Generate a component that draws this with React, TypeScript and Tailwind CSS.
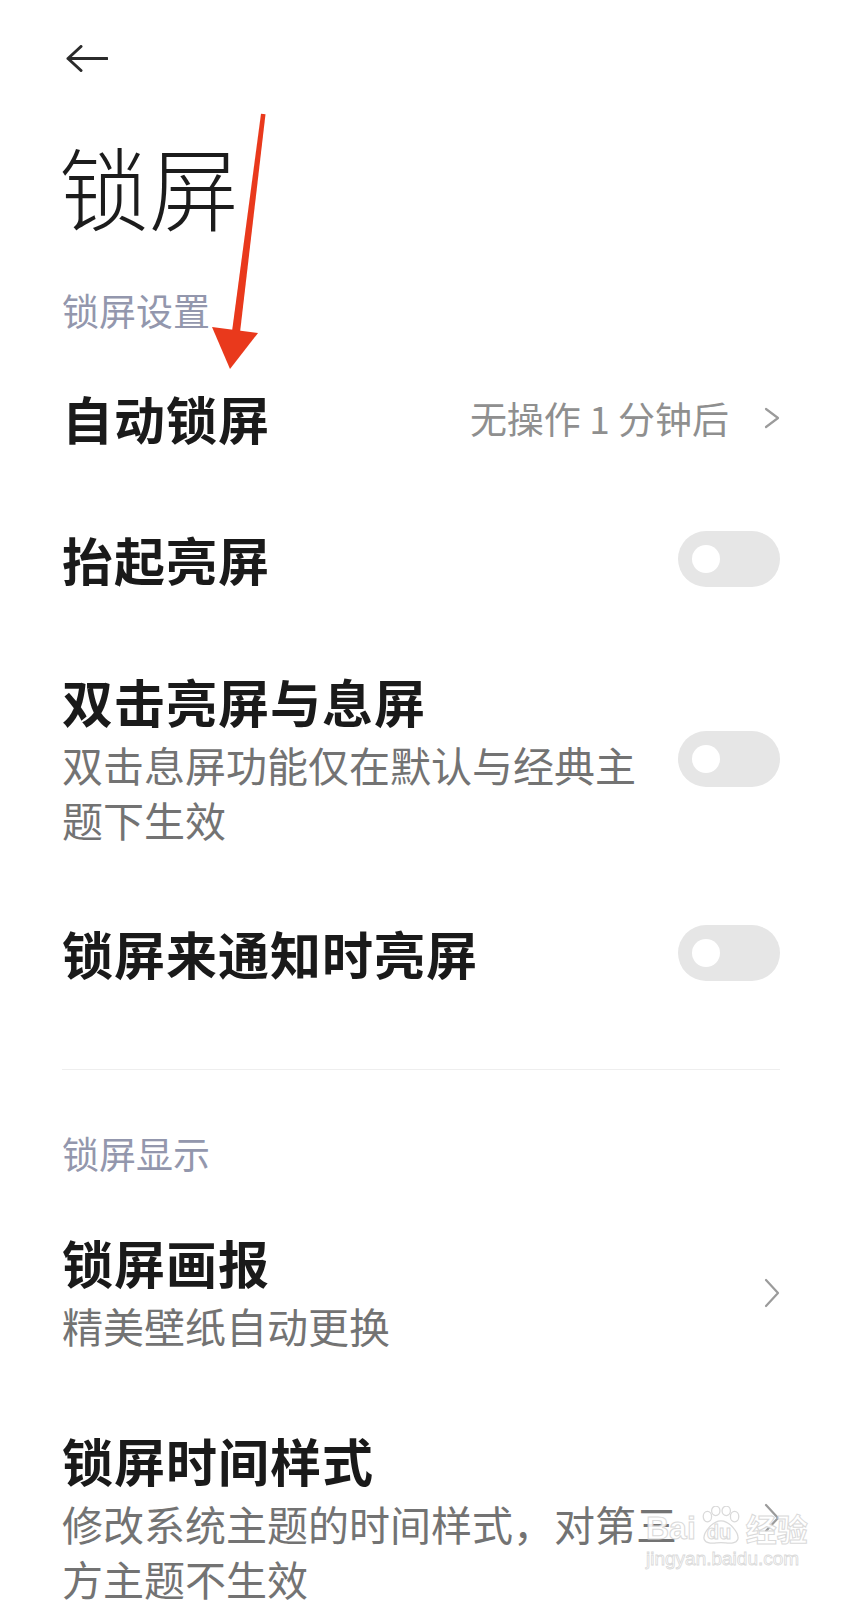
import React from 'react';

function Toggle() {
  return (
    <div className="flex h-[56px] w-[102px] shrink-0 items-center rounded-full bg-[#e6e6e6] pl-[14px]">
      <div className="h-[28px] w-[28px] rounded-full bg-white" />
    </div>
  );
}

function Chevron({ tall = true }: { tall?: boolean }) {
  return tall ? (
    <svg width="16" height="30" viewBox="0 0 16 30" className="shrink-0">
      <polyline points="2,2 14,15 2,28" fill="none" stroke="#9b9b9b" strokeWidth="2.2" strokeLinecap="round" strokeLinejoin="round" />
    </svg>
  ) : (
    <svg width="16" height="22" viewBox="0 0 16 22" className="shrink-0">
      <polyline points="2,2 14,11 2,20" fill="none" stroke="#9b9b9b" strokeWidth="2.2" strokeLinecap="round" strokeLinejoin="round" />
    </svg>
  );
}

function SectionLabel({ children }: { children: React.ReactNode }) {
  return <div className="text-[37px] leading-[50px] text-[#9397ad]">{children}</div>;
}

function Title({ children }: { children: React.ReactNode }) {
  return <div className="text-[51px] font-bold leading-[60px] tracking-[1px] text-[#1a1a1a]">{children}</div>;
}

function Sub({ children }: { children: React.ReactNode }) {
  return <div className="mt-[6px] text-[41px] leading-[55px] text-[#737373]">{children}</div>;
}

export default function App() {
  return (
    <div className="relative h-[1600px] w-[844px] overflow-hidden bg-white pl-[62px] pr-[64px] pt-[45px] font-['Noto_Sans_CJK_SC','Noto_Sans',sans-serif]">
      {/* back */}
      <svg width="42" height="27" viewBox="0 0 42 27" className="ml-[4px]">
        <path d="M2 13.5 H41 M15 1.5 L2 13.5 L15 25.5" fill="none" stroke="#2b2b2b" strokeWidth="3" strokeLinecap="round" strokeLinejoin="round" />
      </svg>

      <div className="ml-[-3px] mt-[68px] text-[90px] font-light leading-[90px] text-[#1c1c1c]">锁屏</div>

      <div className="mt-[54.5px]">
        <SectionLabel>锁屏设置</SectionLabel>
      </div>

      <div className="mt-[13px]">
        <div className="flex h-[141px] items-center justify-between">
          <Title>自动锁屏</Title>
          <div className="flex items-center gap-[35px]">
            <span className="text-[37px] leading-[50px] text-[#8f8f8f]">无操作 1 分钟后</span>
            <Chevron tall={false} />
          </div>
        </div>

        <div className="flex h-[141px] items-center justify-between gap-[30px]">
          <Title>抬起亮屏</Title>
          <Toggle />
        </div>

        <div className="flex items-center gap-[30px] pb-[36px] pt-[41px]">
          <div className="min-w-0 flex-1">
            <Title>双击亮屏与息屏</Title>
            <Sub>双击息屏功能仅在默认与经典主题下生效</Sub>
          </div>
          <Toggle />
        </div>

        <div className="flex h-[141px] items-center justify-between gap-[30px]">
          <Title>锁屏来通知时亮屏</Title>
          <Toggle />
        </div>
      </div>

      <div className="mt-[45.5px] h-px bg-[#eeeeee]" />

      <div className="mt-[58px]">
        <SectionLabel>锁屏显示</SectionLabel>
      </div>

      <div className="mt-[13px]">
        <div className="flex items-center justify-between pb-[36px] pt-[41px]">
          <div className="w-[635px]">
            <Title>锁屏画报</Title>
            <Sub>精美壁纸自动更换</Sub>
          </div>
          <Chevron />
        </div>

        <div className="flex items-center justify-between pb-[36px] pt-[41px]">
          <div className="w-[635px]">
            <Title>锁屏时间样式</Title>
            <Sub>修改系统主题的时间样式，对第三方主题不生效</Sub>
          </div>
          <Chevron />
        </div>
      </div>

      {/* baidu watermark */}
      <div className="pointer-events-none absolute left-[646px] top-[1506px] flex flex-col items-start opacity-90">
        <div className="relative flex items-end">
          <span className="font-['Liberation_Sans',sans-serif] text-[32px] font-bold leading-[36px] text-white [-webkit-text-stroke:1px_#d6d6d6]">Bai</span>
          <div className="relative mx-[2px] h-[40px] w-[46px]">
            <svg width="46" height="40" viewBox="0 0 44 38" className="absolute left-0 top-0">
              <ellipse cx="9" cy="10" rx="4" ry="5" fill="white" stroke="#d6d6d6" strokeWidth="1.2" />
              <ellipse cx="17" cy="4.5" rx="4" ry="4.5" fill="white" stroke="#d6d6d6" strokeWidth="1.2" />
              <ellipse cx="27" cy="4.5" rx="4" ry="4.5" fill="white" stroke="#d6d6d6" strokeWidth="1.2" />
              <ellipse cx="35" cy="10" rx="4" ry="5" fill="white" stroke="#d6d6d6" strokeWidth="1.2" />
              <path d="M22 14 C30 14 40 26 38 32 C36 37 28 35 22 35 C16 35 8 37 6 32 C4 26 14 14 22 14 Z" fill="white" stroke="#d6d6d6" strokeWidth="1.2" />
            </svg>
            <span className="absolute left-[9px] top-[15px] font-['Liberation_Sans',sans-serif] text-[20px] font-bold leading-[22px] text-white [-webkit-text-stroke:1px_#d6d6d6]">du</span>
          </div>
          <span className="text-[31px] font-bold leading-[36px] text-white [-webkit-text-stroke:1px_#d6d6d6]">经验</span>
        </div>
        <span className="mt-[2px] font-['Liberation_Sans',sans-serif] text-[19px] leading-[22px] text-white [-webkit-text-stroke:0.8px_#d6d6d6]">jingyan.baidu.com</span>
      </div>

      {/* red annotation arrow */}
      <svg className="pointer-events-none absolute left-0 top-0" width="844" height="1600" viewBox="0 0 844 1600">
        <polygon points="261,113.8 265.5,114.2 240,332.5 232,331.5" fill="#e9391c" />
        <polygon points="212,327 258,333 230,369" fill="#e9391c" />
      </svg>
    </div>
  );
}
